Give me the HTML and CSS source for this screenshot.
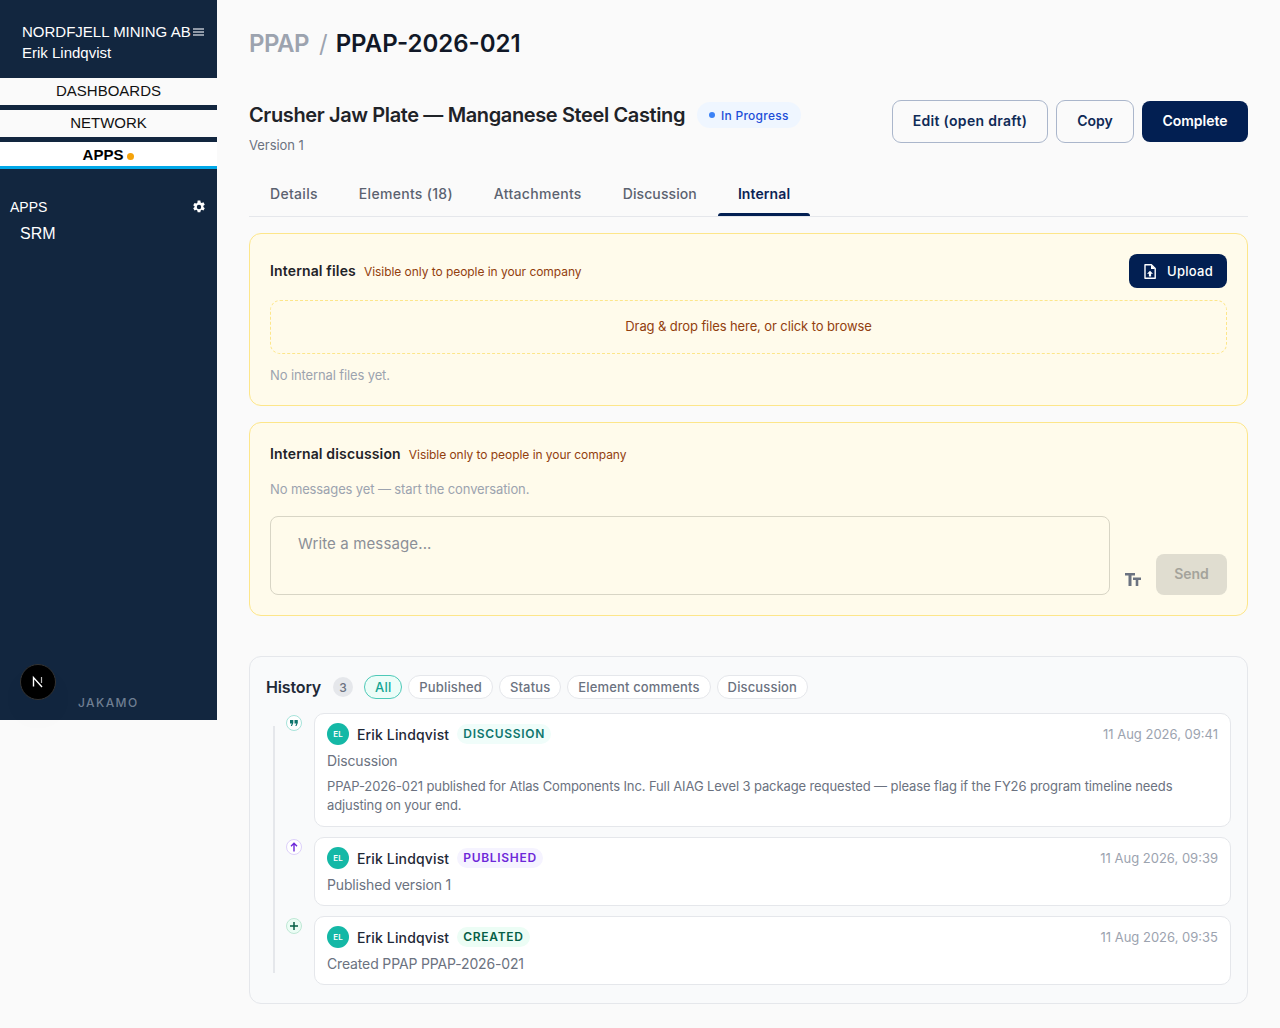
FILE: index.html
```html
<!DOCTYPE html>
<html lang="en">
<head>
<meta charset="utf-8">
<title>PPAP-2026-021</title>
<link rel="stylesheet" href="styles.css">
</head>
<body>
<div class="app">
  <aside class="sidebar">
    <div class="side-head">
      <div class="side-co"><span>NORDFJELL MINING AB</span>
        <svg class="burger" width="12" height="8" viewBox="0 0 12 8"><path d="M0 1h11M0 4h11M0 7h11" stroke="#b9c0ca" stroke-width="1.5"/></svg>
      </div>
      <div class="side-user">Erik Lindqvist</div>
    </div>
    <nav class="side-nav">
      <a class="nav-item">DASHBOARDS</a>
      <a class="nav-item">NETWORK</a>
      <a class="nav-item nav-active">APPS<i class="nav-dot"></i></a>
    </nav>
    <div class="side-section">
      <span>APPS</span>
      <svg width="14" height="14" viewBox="0 0 24 24"><path fill="#fff" fill-rule="evenodd" d="M14.3 1l.6 3.1 1.7 1 3-1.1 2.3 4-2.4 2v2l2.4 2-2.3 4-3-1.1-1.7 1-.6 3.1H9.7l-.6-3.1-1.7-1-3 1.1-2.3-4 2.4-2V11l-2.4-2 2.3-4 3 1.1 1.7-1L9.7 1zM12 8.200a3.800 3.800 0 1 0 0 7.600 3.800 3.800 0 0 0 0-7.600z"/></svg>
    </div>
    <div class="side-link">SRM</div>
    <div class="side-brand">JAKAMO</div>
    <div class="next-badge">
      <svg width="16" height="16" viewBox="0 0 16 16"><path d="M3.500 12.500V3.500L12 13" stroke="#fff" stroke-width="1.400" fill="none"/><path d="M11.500 3v6" stroke="#bbb" stroke-width="1.200"/></svg>
    </div>
  </aside>

  <main class="main">
    <h1 class="crumbs"><span class="crumb-root">PPAP</span><span class="crumb-sep">/</span><span>PPAP-2026-021</span></h1>

    <header class="head">
      <div class="head-info">
        <div class="head-title"><h2>Crusher Jaw Plate — Manganese Steel Casting</h2>
          <span class="status"><i></i>In Progress</span></div>
        <div class="version">Version 1</div>
      </div>
      <div class="head-actions">
        <button class="btn btn-line btn-edit">Edit (open draft)</button>
        <button class="btn btn-line btn-copy">Copy</button>
        <button class="btn btn-solid btn-complete">Complete</button>
      </div>
    </header>

    <div class="tabs">
      <a class="tab">Details</a>
      <a class="tab">Elements (18)</a>
      <a class="tab">Attachments</a>
      <a class="tab tab-tight">Discussion</a>
      <a class="tab tab-active">Internal</a>
    </div>

    <section class="note note-files">
      <div class="note-head">
        <div class="note-title"><strong>Internal files</strong><span>Visible only to people in your company</span></div>
        <button class="btn-upload">
          <svg width="12" height="15" viewBox="0 0 12 15"><path fill="none" stroke="#fff" stroke-width="1.400" stroke-linejoin="round" d="M1 .8h6.400L11.200 4.600V14.200H1z"/><path fill="#fff" d="M7 .8v4.200h4.200zM6 6.800L9 9.800H7.100V12.400H4.900V9.800H3z"/></svg>
          Upload
        </button>
      </div>
      <div class="drop">Drag &amp; drop files here, or click to browse</div>
      <p class="empty">No internal files yet.</p>
    </section>

    <section class="note note-disc">
      <div class="note-title"><strong>Internal discussion</strong><span>Visible only to people in your company</span></div>
      <p class="empty empty-disc">No messages yet — start the conversation.</p>
      <div class="composer">
        <div class="textarea">Write a message...</div>
        <svg class="tt" width="16" height="13" viewBox="0 0 16 13"><path fill="#6b7280" d="M0 0h10v2.500H6.500V13h-3V2.500H0zM8 4.500h8V7h-2.700v6h-2.600V7H8z"/></svg>
        <button class="btn-send">Send</button>
      </div>
    </section>

    <section class="history">
      <div class="hist-head">
        <h3>History</h3>
        <span class="count">3</span>
        <span class="chip chip-on">All</span>
        <span class="chip">Published</span>
        <span class="chip">Status</span>
        <span class="chip">Element comments</span>
        <span class="chip">Discussion</span>
      </div>
      <div class="timeline">
        <article class="event">
          <span class="marker m-teal"><svg width="8" height="6" viewBox="0 0 8 6"><path fill="#0f766e" d="M0 0h3.300v3L2 6H.8l1-2.600H0zM4.500 0h3.300v3L6.500 6H5.300l1-2.600H4.500z"/></svg></span>
          <div class="card">
            <div class="card-head">
              <span class="avatar">EL</span><span class="author">Erik Lindqvist</span><span class="tag t-teal">DISCUSSION</span>
              <time>11 Aug 2026, 09:41</time>
            </div>
            <div class="card-line">Discussion</div>
            <p class="card-body">PPAP-2026-021 published for Atlas Components Inc. Full AIAG Level 3 package requested — please flag if the FY26 program timeline needs adjusting on your end.</p>
          </div>
        </article>
        <article class="event">
          <span class="marker m-violet"><svg width="8" height="10" viewBox="0 0 8 10" fill="none" stroke="#6d28d9" stroke-width="1.400"><path d="M4 9.500V1.500M1 4.300l3-3 3 3"/></svg></span>
          <div class="card">
            <div class="card-head">
              <span class="avatar">EL</span><span class="author">Erik Lindqvist</span><span class="tag t-violet">PUBLISHED</span>
              <time>11 Aug 2026, 09:39</time>
            </div>
            <div class="card-line">Published version 1</div>
          </div>
        </article>
        <article class="event">
          <span class="marker m-green"><svg width="8" height="8" viewBox="0 0 8 8" fill="none" stroke="#065f46" stroke-width="1.500"><path d="M4 0v8M0 4h8"/></svg></span>
          <div class="card">
            <div class="card-head">
              <span class="avatar">EL</span><span class="author">Erik Lindqvist</span><span class="tag t-green">CREATED</span>
              <time>11 Aug 2026, 09:35</time>
            </div>
            <div class="card-line">Created PPAP PPAP-2026-021</div>
          </div>
        </article>
      </div>
    </section>
  </main>
</div>
</body>
</html>
```

FILE: styles.css
```css
* { box-sizing: border-box; }
html, body { margin: 0; padding: 0; }
body { background: #fafafa; font-family: Inter, "Liberation Sans", sans-serif; color: #1f2937; height: 1028px; overflow: hidden; }
p, h1, h2, h3 { margin: 0; }
.app { display: flex; align-items: flex-start; }

.sidebar { position: relative; flex: 0 0 217px; width: 217px; height: 720px; background: #12263f; color: #fff; font-family: "Liberation Sans", Arial, sans-serif; }
.side-head { height: 78px; padding: 21px 12px 0 22px; font-size: 15px; line-height: 21px; }
.side-co { display: flex; align-items: center; justify-content: space-between; white-space: nowrap; }
.burger { flex: none; }
.side-nav { display: flex; flex-direction: column; gap: 5px; }
.nav-item { display: flex; align-items: center; justify-content: center; height: 27px; padding-bottom: 2px; background: #fafafa; color: #111; font-size: 15px; }
.nav-active { background: #fff; font-weight: 700; padding: 1px 0 0; border-bottom: 3px solid #00a8e8; color: #000; }
.nav-dot { width: 7px; height: 7px; border-radius: 50%; background: #f5a30a; margin: 3px 0 0 4px; }
.side-section { display: flex; align-items: center; justify-content: space-between; padding: 30px 11px 0 10px; font-size: 14px; line-height: 16px; }
.side-link { padding: 9px 0 0 20px; font-size: 16px; line-height: 20px; }
.side-brand { position: absolute; left: 78px; top: 695px; font-family: Inter, sans-serif; font-size: 12px; line-height: 15px; letter-spacing: 1.4px; font-weight: 500; color: #6f7e92; }
.next-badge { position: absolute; left: 20px; top: 664px; width: 36px; height: 36px; border-radius: 50%; background: #000; border: 1px solid #333; display: flex; align-items: center; justify-content: center; box-shadow: 0 16px 32px -8px rgba(0,0,0,.1); }

.main { flex: 1; min-width: 0; padding: 28px 32px 0; }
.crumbs { display: flex; align-items: center; height: 32px; font-size: 24px; font-weight: 600; line-height: 32px; color: #111827; }
.crumb-root { color: #9ca3af; letter-spacing: -0.5px; }
.crumb-sep { color: #9ca3af; font-weight: 400; margin: 0 8px 0 10px; }

.head { display: flex; justify-content: space-between; align-items: flex-start; margin-top: 40px; height: 69px; }
.head-title { display: flex; align-items: center; gap: 12px; height: 30px; }
.head-title h2 { font-size: 20px; font-weight: 600; line-height: 28px; color: #1f2328; letter-spacing: -0.38px; }
.status { display: inline-flex; align-items: center; height: 26px; padding: 0 12px; border-radius: 13px; background: #eff6ff; color: #1d4ed8; font-size: 12px; font-weight: 500; letter-spacing: 0.25px; }
.status i { width: 6px; height: 6px; border-radius: 50%; background: #3b82f6; margin-right: 6px; }
.version { margin-top: 6px; font-size: 13px; line-height: 18px; letter-spacing: -0.05px; color: #6b7280; }
.head-actions { display: flex; align-items: center; gap: 8px; }
.btn { font-family: Inter, sans-serif; font-size: 14px; font-weight: 600; border-radius: 8px; padding: 0 0 2px; }
.btn-line { height: 43px; background: transparent; border: 1px solid #aab6cb; color: #0f2a56; border-radius: 9px; }
.btn-edit { width: 156px; letter-spacing: 0.3px; }
.btn-copy { width: 78px; }
.btn-solid { height: 41px; background: #021f52; border: 0; color: #fff; }
.btn-complete { width: 106px; }

.tabs { display: flex; gap: 1px; padding-left: 1px; border-bottom: 1px solid #e5e7eb; height: 48px; }
.tab { position: relative; height: 47px; padding: 0 20px; font-size: 14px; font-weight: 500; line-height: 49px; letter-spacing: 0.3px; color: #5b6270; }
.tab-tight { letter-spacing: 0.1px; }
.tab-active { color: #0b2355; font-weight: 600; letter-spacing: 0.1px; }
.tab-active::after { content: ""; position: absolute; left: 0; right: 0; bottom: 0; height: 3px; border-radius: 3px 3px 0 0; background: #021f52; }

.note { background: #fffbeb; border: 1px solid #fde68a; border-radius: 12px; padding: 20px; }
.note-files { height: 173px; margin-top: 16px; }
.note-disc { height: 194px; margin-top: 16px; }
.note-head { display: flex; justify-content: space-between; align-items: center; height: 34px; }
.note-head .note-title { padding-bottom: 2px; }
.note-disc .note-title { margin-top: 2px; }
.note-title { display: flex; align-items: baseline; gap: 8px; }
.note-title strong { font-size: 14px; font-weight: 600; color: #1f2328; letter-spacing: 0.15px; }
.note-title span { font-size: 12px; color: #92400e; letter-spacing: -0.05px; }
.btn-upload { display: inline-flex; align-items: center; gap: 11px; height: 34px; width: 98px; padding: 0 0 0 15px; border: 0; border-radius: 8px; background: #021f52; color: #fff; font-family: Inter, sans-serif; font-size: 13px; font-weight: 500; letter-spacing: 0.3px; }
.drop { display: flex; align-items: center; justify-content: center; height: 54px; margin-top: 12px; padding-bottom: 2px; border: 1px dashed #fde68a; border-radius: 10px; font-size: 13px; letter-spacing: -0.1px; color: #92400e; }
.empty { font-size: 13px; line-height: 18px; letter-spacing: -0.12px; color: #9ca3af; }
.note-files .empty { margin-top: 12px; }
.empty-disc { margin-top: 18px; }
.composer { display: flex; align-items: flex-end; margin-top: 18px; }
.textarea { flex: 0 0 840px; height: 79px; padding: 16px 27px; border: 1px solid #d8d5c5; border-radius: 8px; font-size: 15px; line-height: 22px; letter-spacing: 0.13px; color: #8b8f97; }
.tt { flex: none; margin: 0 15px 9px 15px; }
.btn-send { width: 71px; height: 41px; padding: 0 0 2px; border: 0; border-radius: 8px; background: #e0ddd0; color: #a4a39b; font-family: Inter, sans-serif; font-size: 14px; font-weight: 600; }

.history { margin-top: 40px; height: 348px; background: #f9fafb; border: 1px solid #e5e7eb; border-radius: 12px; padding: 17px 16px 0; }
.hist-head { display: flex; align-items: center; gap: 6px; height: 26px; }
.hist-head h3 { font-size: 16px; font-weight: 600; letter-spacing: -0.15px; color: #1f2937; margin-right: 6px; }
.count { display: flex; align-items: center; justify-content: center; width: 20px; height: 20px; border-radius: 50%; background: #e5e7eb; font-size: 12px; font-weight: 500; color: #6b7280; margin-right: 5px; }
.chip { display: inline-flex; align-items: center; height: 24px; padding: 0 10px; border: 1px solid #e5e7eb; border-radius: 12px; background: #fff; font-size: 13px; font-weight: 500; letter-spacing: 0.15px; color: #6b7280; }
.chip-on { border-color: #4ec9b8; background: #ecfdf8; color: #14a594; }

.timeline { position: relative; margin-top: 13px; display: flex; flex-direction: column; gap: 10px; }
.timeline::before { content: ""; position: absolute; left: 7px; top: 13px; bottom: 12px; width: 2px; background: #e5e7eb; }
.event { position: relative; padding-left: 48px; }
.marker { position: absolute; left: 20px; top: 2px; width: 16px; height: 16px; border-radius: 50%; background: #fff; border: 1px solid; display: flex; align-items: center; justify-content: center; }
.m-teal { border-color: #a7e3da; }
.m-violet { border-color: #ddd0fa; }
.m-green { border-color: #bfe8d5; background: #ecfdf5; }
.card { background: #fff; border: 1px solid #e5e7eb; border-radius: 10px; padding: 9px 12px 10px; }
.card-head { display: flex; align-items: center; height: 22px; }
.avatar { flex: none; width: 22px; height: 22px; border-radius: 50%; background: #14b8a6; color: #fff; font-size: 8px; font-weight: 600; display: flex; align-items: center; justify-content: center; }
.author { margin-left: 8px; font-size: 14px; font-weight: 500; letter-spacing: 0.15px; color: #1f2937; }
.tag { margin-left: 8px; padding: 0 6px; height: 20px; line-height: 20px; border-radius: 10px; font-size: 12px; font-weight: 600; letter-spacing: 0.7px; }
.t-teal { background: #f0fdfa; color: #0f766e; }
.t-violet { background: #f5f3ff; color: #6d28d9; }
.t-green { background: #ecfdf5; color: #065f46; }
time { margin-left: auto; font-size: 13px; color: #9ca3af; }
.card-line { margin-top: 6px; font-size: 14px; line-height: 20px; letter-spacing: -0.15px; color: #6b7280; }
.card-body { margin: 6px 0 1px; font-size: 13px; line-height: 19px; letter-spacing: -0.11px; color: #6b7280; }
```
